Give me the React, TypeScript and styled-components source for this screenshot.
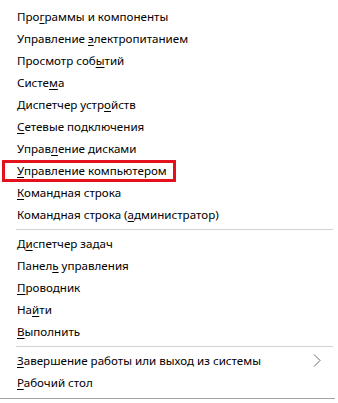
import React from 'react';
import styled, { createGlobalStyle } from 'styled-components';

const GlobalStyle = createGlobalStyle`
  html, body {
    margin: 0;
    padding: 0;
    background: #ffffff;
  }
  body {
    font-family: "Noto Sans", "Open Sans", Arial, sans-serif;
  }
`;

const Menu = styled.nav`
  width: 335px;
  padding-top: 5px;
  padding-bottom: 5px;
  background: #ffffff;
  border-bottom: 1px solid #a3a3a3;
  display: flex;
  flex-direction: column;
`;

const Item = styled.div`
  position: relative;
  height: 22px;
  display: flex;
  align-items: center;
  padding: 0 14px 0 17px;
  font-size: 11.6px;
  color: #000000;
  white-space: nowrap;
`;

const Label = styled.span`
  flex: 1;
`;

const Key = styled.span`
  text-decoration: underline;
  text-underline-offset: 2px;
  text-decoration-thickness: 1px;
`;

const Highlight = styled.span`
  position: absolute;
  left: 2px;
  top: 1px;
  width: 174px;
  height: 22px;
  box-sizing: border-box;
  border: 3px solid #e3101e;
  pointer-events: none;
`;

const Separator = styled.hr`
  border: none;
  height: 1px;
  background: #d2d2d2;
  margin: 4px 2px 2px 16px;
`;

const Chevron = () => (
  <svg width="8" height="13" viewBox="0 0 8 13" fill="none">
    <polyline points="1,0.5 7,6.5 1,12.5" stroke="#6a6a6a" strokeWidth="1" />
  </svg>
);

type Entry = { text: string; key: number; highlight?: boolean; submenu?: boolean } | 'sep';

const entries: Entry[] = [
  { text: 'Программы и компоненты', key: 3 },
  { text: 'Управление электропитанием', key: 11 },
  { text: 'Просмотр событий', key: 12 },
  { text: 'Система', key: 5 },
  { text: 'Диспетчер устройств', key: 14 },
  { text: 'Сетевые подключения', key: 0 },
  { text: 'Управление дисками', key: 5 },
  { text: 'Управление компьютером', key: 0, highlight: true },
  { text: 'Командная строка', key: 0 },
  { text: 'Командная строка (администратор)', key: 18 },
  'sep',
  { text: 'Диспетчер задач', key: 1 },
  { text: 'Панель управления', key: 5 },
  { text: 'Проводник', key: 0 },
  { text: 'Найти', key: 2 },
  { text: 'Выполнить', key: 0 },
  'sep',
  { text: 'Завершение работы или выход из системы', key: 0, submenu: true },
  { text: 'Рабочий стол', key: 0 },
];

const App: React.FC = () => (
  <>
    <GlobalStyle />
    <Menu>
      {entries.map((e, i) =>
        e === 'sep' ? (
          <Separator key={i} />
        ) : (
          <Item key={i}>
            <Label>
              {e.text.slice(0, e.key)}
              <Key>{e.text[e.key]}</Key>
              {e.text.slice(e.key + 1)}
            </Label>
            {e.submenu && <Chevron />}
            {e.highlight && <Highlight />}
          </Item>
        )
      )}
    </Menu>
  </>
);

export default App;
